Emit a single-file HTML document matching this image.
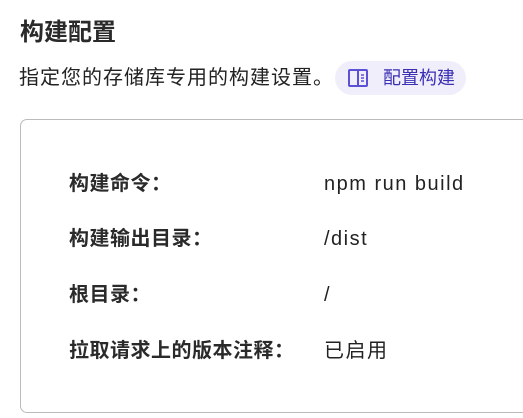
<!DOCTYPE html>
<html><head><meta charset="utf-8"><style>
body{margin:0;width:523px;height:418px;background:#fff;font-family:"Liberation Sans","Noto Sans CJK SC",sans-serif;color:#222;overflow:hidden;position:relative}
.t{position:absolute;left:20px;top:18px;font-size:24px;font-weight:bold;line-height:30px;color:#2a2a2a}
.s{position:absolute;left:19px;top:63px;font-size:20px;letter-spacing:1px;line-height:30px;color:#222}
.pill{position:absolute;left:335px;top:61px;width:131px;height:34px;border-radius:17px;background:#f0eefb;color:#3a2fb5;font-size:18px;line-height:34px}
.pill svg{position:absolute;left:13px;top:8px}
.pill span{position:absolute;left:48px}
.card{position:absolute;left:20px;top:119px;width:540px;height:294px;border:1px solid #bbb;border-radius:7px;box-sizing:border-box}
.r{position:absolute;left:69px;font-size:20px;line-height:28px}
.r b{position:absolute;left:0;white-space:nowrap;color:#2a2a2a;letter-spacing:0.5px}
.r i{font-style:normal;position:absolute;left:255px;white-space:nowrap;font-size:20px;letter-spacing:1.5px}
</style></head><body>
<div class="t">构建配置</div>
<div class="s">指定您的存储库专用的构建设置。</div>
<div class="pill"><svg width="20" height="18" viewBox="0 0 20 18" fill="none" stroke="#5b50d6" stroke-width="2"><rect x="1" y="1" width="18" height="16" rx="1"/><line x1="10" y1="1" x2="10" y2="17"/><line x1="13" y1="6" x2="16" y2="6" stroke-width="1.5"/><line x1="13" y1="9" x2="16" y2="9" stroke-width="1.5"/><line x1="13" y1="12" x2="16" y2="12" stroke-width="1.5"/></svg><span>配置构建</span></div>
<div class="card"></div>
<div class="r" style="top:170px"><b>构建命令：</b><i>npm run build</i></div>
<div class="r" style="top:225px"><b>构建输出目录：</b><i>/dist</i></div>
<div class="r" style="top:281px"><b>根目录：</b><i>/</i></div>
<div class="r" style="top:337px"><b>拉取请求上的版本注释：</b><i>已启用</i></div>
</body></html>
